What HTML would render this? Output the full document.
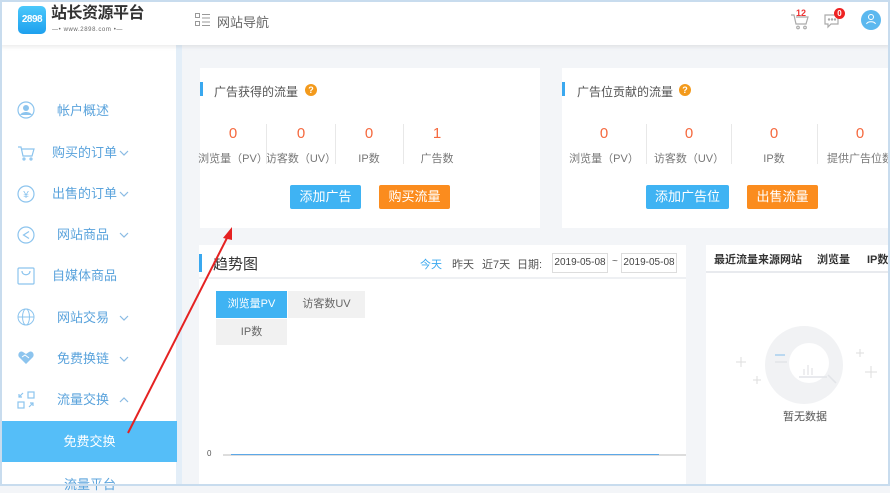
<!DOCTYPE html>
<html><head><meta charset="utf-8"><style>
*{margin:0;padding:0;box-sizing:border-box}
body{width:890px;height:486px;overflow:hidden;background:#f3f5f8;font-family:"Liberation Sans","Noto Sans CJK SC",sans-serif;position:relative;color:#666}
.a{position:absolute}
.frame{left:0;top:0;width:890px;height:486px;border:2px solid #c8dcee;z-index:50;pointer-events:none}
.hdr{left:0;top:0;width:890px;height:45px;background:#fff;box-shadow:0 2px 4px rgba(0,0,0,.08);z-index:5}
.side{left:0;top:45px;width:182px;height:441px;background:#fff;border-right:6px solid #e3eef8}
.mi{left:0;width:177px;height:20px;font-size:13px;color:#5aa3dc;line-height:20px}
.mi .t{position:absolute;left:52px}
.mi svg{position:absolute;left:119px;top:7px}
.card{background:#fff}
.bar{width:3px;height:14px;background:#3aa8ef}
.ttl{font-size:12px;color:#555}
.q{width:12px;height:12px;border-radius:50%;background:#f39a1c;color:#fff;font-size:9px;font-weight:bold;text-align:center;line-height:12px}
.num{font-size:15px;color:#f5693e;text-align:center;width:80px}
.lab{font-size:11px;color:#777;text-align:center;width:90px;white-space:nowrap}
.sep{width:1px;height:40px;background:#e8e8e8}
.btn{height:24px;color:#fff;font-size:13px;text-align:center;line-height:24px;border-radius:2px}
.blue{background:#3fb3f3}.org{background:#fb8c1e}
</style></head><body>
<div class="a hdr">
 <div class="a" style="left:18px;top:6px;width:28px;height:28px;border-radius:5px;background:linear-gradient(#4ac8fb,#1ea0ee);color:#fff;font-size:10px;font-weight:bold;text-align:center;line-height:28px;letter-spacing:-0.5px">2898</div>
 <div class="a" style="left:51px;top:4px;font-size:16px;font-weight:bold;color:#333;letter-spacing:-0.5px;line-height:20px">站长资源平台</div>
 <div class="a" style="left:52px;top:26px;font-size:6px;color:#666;letter-spacing:0.6px;line-height:8px">—• www.2898.com •—</div>
 <svg class="a" style="left:195px;top:13px" width="16" height="14" viewBox="0 0 16 14" fill="none" stroke="#999" stroke-width="1"><rect x=".5" y=".5" width="4" height="4"/><rect x=".5" y="8.5" width="4" height="4"/><path d="M7 1.5h8M7 5h8M7 9h8M7 12.5h8"/></svg>
 <div class="a" style="left:217px;top:12px;font-size:13px;color:#666">网站导航</div>
 <svg class="a" style="left:790px;top:12px" width="20" height="18" viewBox="0 0 20 18" fill="none" stroke="#aaa" stroke-width="1.2"><path d="M1 3h3l2 9h10l2-7H6"/><circle cx="8" cy="15.5" r="1.3"/><circle cx="15" cy="15.5" r="1.3"/></svg>
 <div class="a" style="left:796px;top:8px;font-size:9px;font-weight:bold;color:#e33">12</div>
 <svg class="a" style="left:823px;top:13px" width="18" height="16" viewBox="0 0 18 16" fill="none" stroke="#aaa" stroke-width="1.2"><path d="M2 2h13v9H8l-3 3v-3H2z"/><circle cx="6" cy="6.5" r=".6" fill="#aaa"/><circle cx="9" cy="6.5" r=".6" fill="#aaa"/><circle cx="12" cy="6.5" r=".6" fill="#aaa"/></svg>
 <div class="a" style="left:834px;top:8px;width:11px;height:11px;border-radius:50%;background:#e22;color:#fff;font-size:8px;font-weight:bold;text-align:center;line-height:11px">0</div>
 <div class="a" style="left:861px;top:10px;width:20px;height:20px;border-radius:50%;background:#5bb8ef"></div>
 <svg class="a" style="left:865px;top:13px" width="12" height="12" viewBox="0 0 12 12" fill="none" stroke="#fff" stroke-width="1"><circle cx="6" cy="4" r="2.5"/><path d="M1.5 11c1-3 8-3 9 0"/></svg>
</div>
<div class="a side"></div>
<svg class="a" style="left:17px;top:101px" width="18" height="18" viewBox="0 0 18 18"><circle cx="9" cy="9" r="8" fill="none" stroke="#8cc4ee" stroke-width="1.2"/><circle cx="9" cy="7" r="3" fill="#8cc4ee"/><path d="M3 14c2-4 10-4 12 0" fill="#8cc4ee"/></svg>
<div class="a mi" style="top:101px"><span class="t" style="left:57px">帐户概述</span></div>
<svg class="a" style="left:17px;top:145px" width="18" height="16" viewBox="0 0 18 16" fill="none" stroke="#8cc4ee" stroke-width="1.2"><path d="M1 2h3l2 9h9l2-7H5"/><circle cx="7" cy="14" r="1"/><circle cx="14" cy="14" r="1"/></svg>
<div class="a mi" style="top:143px"><span class="t">购买的订单</span><svg width="10" height="6" viewBox="0 0 10 6" fill="none" stroke="#8abbe3" stroke-width="1.2"><path d="M1 1l4 4 4-4"/></svg></div>
<svg class="a" style="left:17px;top:185px" width="18" height="18" viewBox="0 0 18 18"><circle cx="9" cy="9" r="8" fill="none" stroke="#8cc4ee" stroke-width="1.2"/><text x="9" y="13" font-size="10" fill="#8cc4ee" text-anchor="middle" font-family="Liberation Sans">¥</text></svg>
<div class="a mi" style="top:184px"><span class="t">出售的订单</span><svg width="10" height="6" viewBox="0 0 10 6" fill="none" stroke="#8abbe3" stroke-width="1.2"><path d="M1 1l4 4 4-4"/></svg></div>
<svg class="a" style="left:17px;top:226px" width="18" height="18" viewBox="0 0 18 18" fill="none" stroke="#8cc4ee" stroke-width="1.2"><circle cx="9" cy="9" r="8"/><path d="M12 5.5L6.5 9l5.5 3.5"/></svg>
<div class="a mi" style="top:225px"><span class="t" style="left:57px">网站商品</span><svg width="10" height="6" viewBox="0 0 10 6" fill="none" stroke="#8abbe3" stroke-width="1.2"><path d="M1 1l4 4 4-4"/></svg></div>
<svg class="a" style="left:17px;top:267px" width="18" height="18" viewBox="0 0 18 18" fill="none" stroke="#8cc4ee" stroke-width="1.2"><rect x="1" y="1" width="16" height="16" rx="1"/><path d="M5 4c0 5 8 5 8 0"/></svg>
<div class="a mi" style="top:266px"><span class="t">自媒体商品</span></div>
<svg class="a" style="left:17px;top:308px" width="18" height="18" viewBox="0 0 18 18" fill="none" stroke="#8cc4ee" stroke-width="1"><circle cx="9" cy="9" r="8"/><ellipse cx="9" cy="9" rx="3.5" ry="8"/><path d="M1 9h16"/></svg>
<div class="a mi" style="top:308px"><span class="t" style="left:57px">网站交易</span><svg width="10" height="6" viewBox="0 0 10 6" fill="none" stroke="#8abbe3" stroke-width="1.2"><path d="M1 1l4 4 4-4"/></svg></div>
<svg class="a" style="left:17px;top:349px" width="18" height="16" viewBox="0 0 18 16"><path d="M9 15L2 8C0 5 3 1 6 3l3 2 3-2c3-2 6 2 4 5z" fill="#8cc4ee"/><path d="M5 8l3-2 4 3" stroke="#fff" fill="none"/></svg>
<div class="a mi" style="top:349px"><span class="t" style="left:57px">免费换链</span><svg width="10" height="6" viewBox="0 0 10 6" fill="none" stroke="#8abbe3" stroke-width="1.2"><path d="M1 1l4 4 4-4"/></svg></div>
<svg class="a" style="left:17px;top:391px" width="18" height="18" viewBox="0 0 18 18" fill="none" stroke="#8cc4ee" stroke-width="1.2"><rect x="11" y="1" width="6" height="6"/><rect x="1" y="11" width="6" height="6"/><path d="M6 2L2 6M2 3v3h3M12 16l4-4M16 15v-3h-3"/></svg>
<div class="a mi" style="top:390px"><span class="t" style="left:57px">流量交换</span><svg width="10" height="6" viewBox="0 0 10 6" fill="none" stroke="#8abbe3" stroke-width="1.2"><path d="M1 5l4-4 4 4"/></svg></div>
<div class="a" style="left:2px;top:421px;width:175px;height:41px;background:#55bef8;color:#fff;font-size:13px;text-align:center;line-height:41px">免费交换</div>
<div class="a" style="left:64px;top:474px;font-size:13px;color:#5aa3dc">流量平台</div>

<div class="a card" style="left:200px;top:68px;width:340px;height:160px"></div>
<div class="a bar" style="left:200px;top:82px"></div>
<div class="a ttl" style="left:214px;top:83px">广告获得的流量</div>
<div class="a q" style="left:305px;top:84px">?</div>
<div class="a num" style="left:193px;top:125px">0</div><div class="a num" style="left:261px;top:125px">0</div><div class="a num" style="left:329px;top:125px">0</div><div class="a num" style="left:397px;top:125px">1</div>
<div class="a lab" style="left:188px;top:150px">浏览量（PV）</div><div class="a lab" style="left:256px;top:150px">访客数（UV）</div><div class="a lab" style="left:324px;top:150px">IP数</div><div class="a lab" style="left:392px;top:150px">广告数</div>
<div class="a sep" style="left:266px;top:124px"></div><div class="a sep" style="left:335px;top:124px"></div><div class="a sep" style="left:403px;top:124px"></div>
<div class="a btn blue" style="left:290px;top:185px;width:71px">添加广告</div>
<div class="a btn org" style="left:379px;top:185px;width:71px">购买流量</div>

<div class="a card" style="left:562px;top:68px;width:328px;height:160px"></div>
<div class="a bar" style="left:562px;top:82px"></div>
<div class="a ttl" style="left:577px;top:83px">广告位贡献的流量</div>
<div class="a q" style="left:679px;top:84px">?</div>
<div class="a num" style="left:564px;top:125px">0</div><div class="a num" style="left:649px;top:125px">0</div><div class="a num" style="left:734px;top:125px">0</div><div class="a num" style="left:820px;top:125px">0</div>
<div class="a lab" style="left:559px;top:150px">浏览量（PV）</div><div class="a lab" style="left:644px;top:150px">访客数（UV）</div><div class="a lab" style="left:729px;top:150px">IP数</div><div class="a lab" style="left:815px;top:150px">提供广告位数</div>
<div class="a sep" style="left:646px;top:124px"></div><div class="a sep" style="left:731px;top:124px"></div><div class="a sep" style="left:817px;top:124px"></div>
<div class="a btn blue" style="left:646px;top:185px;width:83px">添加广告位</div>
<div class="a btn org" style="left:747px;top:185px;width:71px">出售流量</div>

<div class="a card" style="left:199px;top:245px;width:487px;height:241px"></div>
<div class="a" style="left:199px;top:277px;width:487px;height:2px;background:#eef0f3"></div>
<div class="a bar" style="left:199px;top:254px;height:18px"></div>
<div class="a" style="left:213px;top:253px;font-size:15px;color:#333">趋势图</div>
<div class="a" style="left:420px;top:256px;font-size:11px;color:#3aa8ef">今天</div>
<div class="a" style="left:452px;top:256px;font-size:11px;color:#555">昨天</div>
<div class="a" style="left:482px;top:256px;font-size:11px;color:#555">近7天</div>
<div class="a" style="left:517px;top:256px;font-size:11px;color:#555">日期:</div>
<div class="a" style="left:552px;top:253px;width:56px;height:20px;border:1px solid #ddd;font-size:10px;color:#444;text-align:center;line-height:18px">2019-05-08</div>
<div class="a" style="left:612px;top:256px;font-size:10px;color:#555">~</div>
<div class="a" style="left:621px;top:253px;width:56px;height:20px;border:1px solid #ddd;font-size:10px;color:#444;text-align:center;line-height:18px">2019-05-08</div>
<div class="a" style="left:216px;top:291px;width:71px;height:27px;background:#3fb3f3;color:#fff;font-size:11px;text-align:center;line-height:27px">浏览量PV</div>
<div class="a" style="left:288px;top:291px;width:77px;height:27px;background:#f1f1f1;color:#666;font-size:11px;text-align:center;line-height:27px">访客数UV</div>
<div class="a" style="left:216px;top:319px;width:71px;height:26px;background:#f1f1f1;color:#666;font-size:11px;text-align:center;line-height:26px">IP数</div>
<div class="a" style="left:207px;top:449px;font-size:8px;color:#555">0</div>
<div class="a" style="left:223px;top:454px;width:463px;height:2px;background:#ddd"></div>
<div class="a" style="left:231px;top:454px;width:428px;height:1px;background:#5ca8e8"></div>

<div class="a card" style="left:706px;top:245px;width:184px;height:241px"></div>
<div class="a" style="left:706px;top:271px;width:184px;height:2px;background:#e8eaee"></div>
<div class="a" style="left:714px;top:251px;font-size:11px;font-weight:bold;color:#333;white-space:nowrap">最近流量来源网站<span style="margin-left:15px">浏览量</span><span style="margin-left:17px">IP数</span></div>
<div class="a" style="left:765px;top:326px;width:78px;height:78px;border-radius:50%;background:#f1f2f4"></div>
<div class="a" style="left:789px;top:343px;width:40px;height:40px;border-radius:50%;background:#fff"></div>
<svg class="a" style="left:735px;top:320px" width="150" height="100" viewBox="0 0 150 100" fill="none"><path d="M40 35h10" stroke="#a8d0ee" stroke-width="1.5"/><path d="M40 42h12M64 57h28M93 55l8 8" stroke="#e2e4e8" stroke-width="1.5"/><path d="M69 55v-6M73 55v-10M77 55v-7" stroke="#dcdee2"/><path d="M1 42h10M6 37v10M18 60h8M22 56v8M121 33h8M125 29v8M130 52h12M136 46v12" stroke="#ddd"/></svg>
<div class="a" style="left:783px;top:408px;font-size:11px;color:#555">暂无数据</div>

<svg class="a" style="left:0;top:0;z-index:20" width="890" height="486"><path d="M128 433L229 234" stroke="#e52222" stroke-width="2"/><path d="M232 227l-9 11 9 2z" fill="#e52222"/></svg>
<div class="a frame"></div>
</body></html>
